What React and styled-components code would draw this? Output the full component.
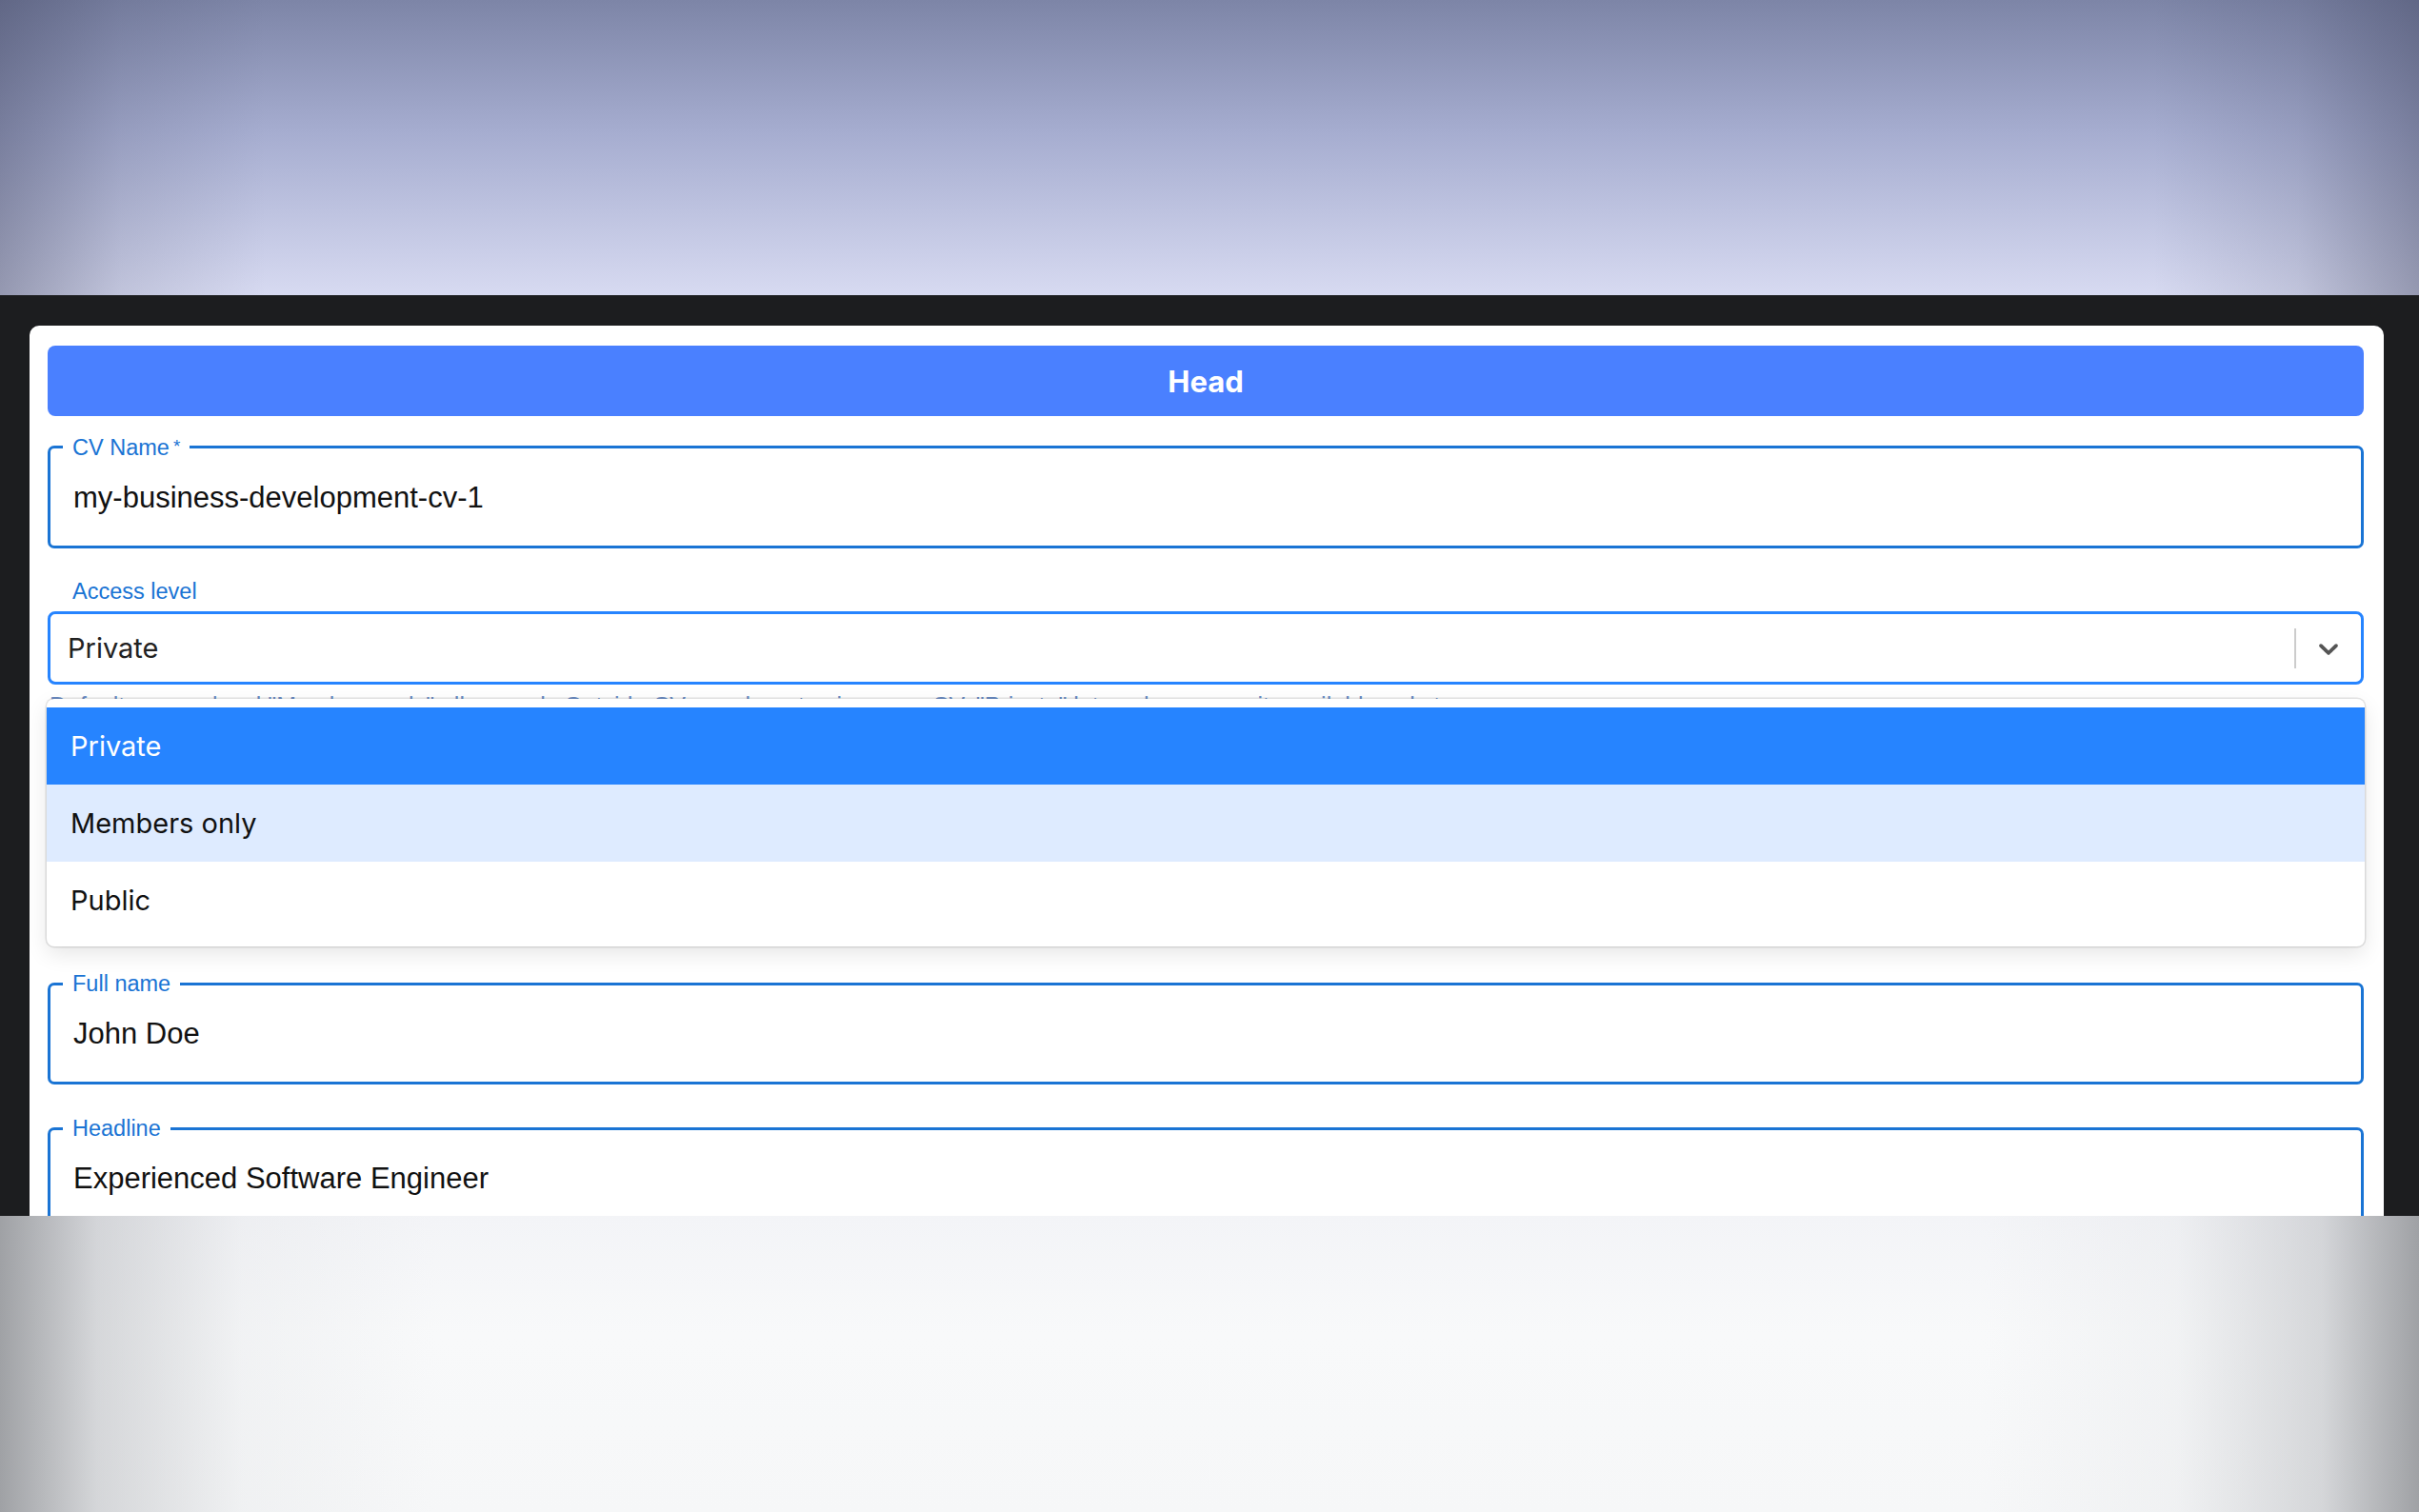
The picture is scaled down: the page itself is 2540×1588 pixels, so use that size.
import styled, { createGlobalStyle } from "styled-components";

const GlobalStyle = createGlobalStyle`
  html, body {
    margin: 0;
    padding: 0;
    background: #1c1d1f;
  }
  * {
    box-sizing: border-box;
  }
`;

const Page = styled.div`
  width: 2540px;
  height: 1588px;
  display: flex;
  flex-direction: column;
  overflow: hidden;
`;

const TopBackdrop = styled.div`
  height: 310px;
  flex-shrink: 0;
  background:
    linear-gradient(
      to right,
      rgba(58, 62, 88, 0.42) 0%,
      rgba(58, 62, 88, 0.14) 5%,
      rgba(58, 62, 88, 0) 11%,
      rgba(58, 62, 88, 0) 89%,
      rgba(58, 62, 88, 0.14) 95%,
      rgba(58, 62, 88, 0.42) 100%
    ),
    linear-gradient(to bottom, #7d85a7 0%, #a6add0 45%, #d7daf1 100%);
`;

const BottomBackdrop = styled.div`
  height: 311px;
  flex-shrink: 0;
  background:
    linear-gradient(
      to right,
      rgba(150, 152, 156, 0.9) 0%,
      rgba(185, 187, 191, 0.55) 4%,
      rgba(220, 222, 225, 0.25) 10%,
      rgba(255, 255, 255, 0) 18%,
      rgba(255, 255, 255, 0) 82%,
      rgba(220, 222, 225, 0.25) 90%,
      rgba(185, 187, 191, 0.55) 96%,
      rgba(150, 152, 156, 0.9) 100%
    ),
    linear-gradient(to bottom, #f3f4f7 0%, #f8f9fa 40%, #f6f7f8 100%);
`;

const Frame = styled.div`
  flex: 1;
  min-height: 0;
  background: #1c1d1f;
  padding: 32px 37px 0 31px;
  display: flex;
`;

const Card = styled.div`
  flex: 1;
  background: #fff;
  border-radius: 10px 10px 0 0;
  padding: 21px 21px 0 19px;
  overflow: hidden;
  display: flex;
  flex-direction: column;
`;

const SectionButton = styled.button`
  height: 74px;
  flex-shrink: 0;
  border: none;
  border-radius: 8px;
  background: #4a80ff;
  color: #fff;
  font-family: Inter, "Liberation Sans", sans-serif;
  font-weight: 700;
  font-size: 31px;
  cursor: pointer;
`;

const Field = styled.fieldset`
  margin: ${(p) => p.$top}px 0 0;
  padding: 0 24px;
  border: 3px solid #1a74d4;
  border-radius: 7px;
  min-width: 0;
  flex-shrink: 0;
`;

const Legend = styled.legend`
  margin-left: -11px;
  padding: 0 10px;
  font-family: "Liberation Sans", Arial, sans-serif;
  font-size: 23.5px;
  line-height: 24px;
  color: #1a74d4;
`;

const Required = styled.span`
  margin-left: 4px;
  font-size: 19px;
  vertical-align: 3px;
`;

const Value = styled.div`
  padding: 23px 0 32px;
  font-family: "Liberation Sans", Arial, sans-serif;
  font-size: 31px;
  line-height: 36px;
  color: #111;
`;

const SelectBlock = styled.div`
  margin-top: 33px;
  flex-shrink: 0;
`;

const SelectLabel = styled.div`
  padding-left: 26px;
  font-family: "Liberation Sans", Arial, sans-serif;
  font-size: 23.5px;
  line-height: 24px;
  color: #1a74d4;
`;

const SelectWrap = styled.div`
  position: relative;
  margin-top: 9px;
`;

const Control = styled.div`
  height: 77px;
  display: flex;
  align-items: center;
  border: 3px solid #2684ff;
  border-radius: 8px;
  background: #fff;
`;

const SelectValue = styled.div`
  flex: 1;
  padding-left: 18px;
  font-family: Inter, "Liberation Sans", sans-serif;
  font-size: 29px;
  color: #222;
`;

const Separator = styled.span`
  align-self: center;
  width: 2px;
  height: 42px;
  background: #cccccc;
`;

const Indicator = styled.div`
  width: 68px;
  display: flex;
  align-items: center;
  justify-content: center;
  color: #555;
`;

const Helper = styled.div`
  margin-top: 8px;
  margin-bottom: 232px;
  padding-left: 2px;
  font-family: "Liberation Sans", Arial, sans-serif;
  font-size: 25px;
  line-height: 28px;
  color: #6c8fc8;
  white-space: nowrap;
`;

const Menu = styled.div`
  position: absolute;
  top: calc(100% + 15px);
  left: -1px;
  right: -1px;
  padding: 9px 0 8px;
  background: #fff;
  border-radius: 8px;
  box-shadow:
    0 0 0 1.5px rgba(0, 0, 0, 0.1),
    0 8px 22px rgba(0, 0, 0, 0.1);
  z-index: 2;
`;

const Option = styled.div`
  height: 81px;
  display: flex;
  align-items: center;
  padding: 0 25px;
  font-family: Inter, "Liberation Sans", sans-serif;
  font-size: 29px;
  color: ${(p) => (p.$selected ? "#fff" : "#111")};
  background: ${(p) =>
    p.$selected ? "#2684ff" : p.$focused ? "#deebff" : "transparent"};
`;

const Chevron = () => (
  <svg width="34" height="34" viewBox="0 0 20 20" fill="currentColor">
    <path d="M4.516 7.548c0.436-0.446 1.043-0.481 1.576 0l3.908 3.747 3.908-3.747c0.533-0.481 1.141-0.446 1.574 0 0.436 0.445 0.408 1.197 0 1.615-0.406 0.418-4.695 4.502-4.695 4.502-0.217 0.223-0.502 0.335-0.787 0.335s-0.57-0.112-0.789-0.335c0 0-4.287-4.084-4.695-4.502s-0.436-1.17 0-1.615z" />
  </svg>
);

const accessOptions = [
  { label: "Private", selected: true },
  { label: "Members only", focused: true },
  { label: "Public" },
];

export default function App() {
  return (
    <>
      <GlobalStyle />
      <Page>
        <TopBackdrop />
        <Frame>
          <Card>
            <SectionButton>Head</SectionButton>

            <Field $top={20}>
              <Legend>
                CV Name<Required>*</Required>
              </Legend>
              <Value>my-business-development-cv-1</Value>
            </Field>

            <SelectBlock>
              <SelectLabel>Access level</SelectLabel>
              <SelectWrap>
                <Control>
                  <SelectValue>Private</SelectValue>
                  <Separator />
                  <Indicator>
                    <Chevron />
                  </Indicator>
                </Control>
                <Menu>
                  {accessOptions.map((o) => (
                    <Option
                      key={o.label}
                      $selected={o.selected}
                      $focused={o.focused}
                    >
                      {o.label}
                    </Option>
                  ))}
                </Menu>
              </SelectWrap>
              <Helper>
                Default access level "Members only" allows only Outside CV members to view your CV. "Private" lets only you see it, available only to you.
              </Helper>
            </SelectBlock>

            <Field $top={34}>
              <Legend>Full name</Legend>
              <Value>John Doe</Value>
            </Field>

            <Field $top={34}>
              <Legend>Headline</Legend>
              <Value>Experienced Software Engineer</Value>
            </Field>
          </Card>
        </Frame>
        <BottomBackdrop />
      </Page>
    </>
  );
}
